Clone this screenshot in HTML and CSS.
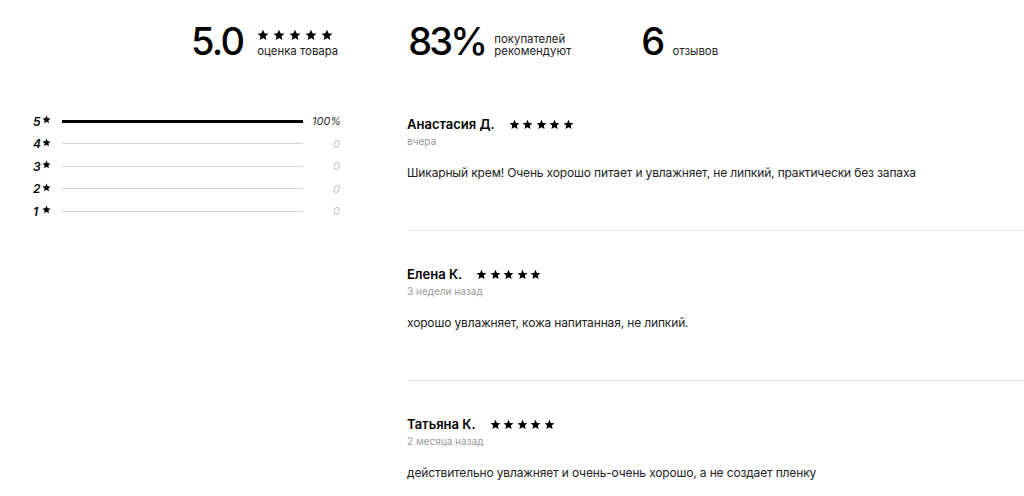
FILE: index.html
```html
<!DOCTYPE html>
<html lang="ru">
<head>
<meta charset="utf-8">
<link rel="stylesheet" href="styles.css">
</head>
<body>
<svg width="0" height="0" style="position:absolute">
  <defs>
    <symbol id="star" viewBox="0 0 24 24"><path d="M12 1.5l3.1 7.1 7.7.7-5.8 5.1 1.7 7.6L12 18.1 5.3 22l1.7-7.6L1.2 9.3l7.7-.7z"/></symbol>
  </defs>
</svg>
<div class="stats">
  <div class="stat stat-first">
    <div class="big">5.0</div>
    <div class="stat-side">
      <div class="stars stars-top">
        <svg><use href="#star"/></svg><svg><use href="#star"/></svg><svg><use href="#star"/></svg><svg><use href="#star"/></svg><svg><use href="#star"/></svg>
      </div>
      <div class="lbl">оценка товара</div>
    </div>
  </div>
  <div class="stat">
    <div class="big big-tight">83%</div>
    <div class="stat-side">
      <div class="lbl">покупателей</div>
      <div class="lbl">рекомендуют</div>
    </div>
  </div>
  <div class="stat">
    <div class="big">6</div>
    <div class="stat-side">
      <div class="lbl">отзывов</div>
    </div>
  </div>
</div>

<div class="main">
  <div class="dist">
    <div class="row">
      <span class="num">5</span><svg class="rstar"><use href="#star"/></svg>
      <div class="bar"><div class="fill" style="width:100%"></div></div>
      <span class="pct on">100%</span>
    </div>
    <div class="row">
      <span class="num">4</span><svg class="rstar"><use href="#star"/></svg>
      <div class="bar"><div class="fill" style="width:0%"></div></div>
      <span class="pct">0</span>
    </div>
    <div class="row">
      <span class="num">3</span><svg class="rstar"><use href="#star"/></svg>
      <div class="bar"><div class="fill" style="width:0%"></div></div>
      <span class="pct">0</span>
    </div>
    <div class="row">
      <span class="num">2</span><svg class="rstar"><use href="#star"/></svg>
      <div class="bar"><div class="fill" style="width:0%"></div></div>
      <span class="pct">0</span>
    </div>
    <div class="row">
      <span class="num">1</span><svg class="rstar"><use href="#star"/></svg>
      <div class="bar"><div class="fill" style="width:0%"></div></div>
      <span class="pct">0</span>
    </div>
  </div>

  <div class="reviews">
    <div class="review">
      <div class="head">
        <span class="name">Анастасия Д.</span>
        <span class="stars rv"><svg><use href="#star"/></svg><svg><use href="#star"/></svg><svg><use href="#star"/></svg><svg><use href="#star"/></svg><svg><use href="#star"/></svg></span>
      </div>
      <div class="date">вчера</div>
      <p class="text">Шикарный крем! Очень хорошо питает и увлажняет, не липкий, практически без запаха</p>
    </div>
    <div class="review">
      <div class="head">
        <span class="name">Елена К.</span>
        <span class="stars rv"><svg><use href="#star"/></svg><svg><use href="#star"/></svg><svg><use href="#star"/></svg><svg><use href="#star"/></svg><svg><use href="#star"/></svg></span>
      </div>
      <div class="date">3 недели назад</div>
      <p class="text">хорошо увлажняет, кожа напитанная, не липкий.</p>
    </div>
    <div class="review">
      <div class="head">
        <span class="name">Татьяна К.</span>
        <span class="stars rv"><svg><use href="#star"/></svg><svg><use href="#star"/></svg><svg><use href="#star"/></svg><svg><use href="#star"/></svg><svg><use href="#star"/></svg></span>
      </div>
      <div class="date">2 месяца назад</div>
      <p class="text">действительно увлажняет и очень-очень хорошо, а не создает пленку</p>
    </div>
  </div>
</div>
</body>
</html>
```

FILE: styles.css
```css
html, body {
  margin: 0;
  padding: 0;
  background: #fff;
  color: #000;
  font-family: Inter, "Liberation Sans", sans-serif;
  overflow: hidden;
}

.stats {
  display: flex;
  gap: 70px;
  padding: 20px 0 0 191px;
  height: 38px;
  align-items: flex-end;
}
.stat {
  display: flex;
  align-items: flex-end;
  gap: 9px;
}
.stat-first {
  gap: 14px;
}
.big {
  font-size: 38px;
  line-height: 34px;
  font-weight: 500;
  letter-spacing: -1.8px;
  color: #000;
}
.big-tight {
  letter-spacing: -2.8px;
}
.stat-side {
  display: flex;
  flex-direction: column;
  padding-bottom: 1px;
}
.lbl {
  font-size: 11.4px;
  line-height: 12px;
  color: #222;
}
.stars {
  display: flex;
  gap: 4px;
}
.stars svg {
  width: 12px;
  height: 12px;
  fill: #000;
}
.stars-top {
  margin-bottom: 4px;
}
.stars.rv {
  gap: 2.5px;
}
.stars.rv svg {
  width: 11px;
  height: 11px;
}

.main {
  display: flex;
  padding: 54px 0 0 33px;
  gap: 67px;
}
.dist {
  width: 307px;
  flex: none;
  display: flex;
  flex-direction: column;
  gap: 10px;
  padding-top: 3px;
}
.row {
  display: flex;
  align-items: center;
  height: 12.5px;
}
.num {
  font-size: 12px;
  font-style: italic;
  font-weight: 600;
  width: 8px;
  color: #000;
}
.rstar {
  width: 9px;
  height: 9px;
  fill: #000;
  margin-left: 1px;
  margin-top: -3px;
}
.bar {
  flex: 1;
  height: 1px;
  background: #d4d4d4;
  margin: 0 9px 0 11px;
  position: relative;
}
.fill {
  position: absolute;
  left: 0;
  top: -1px;
  height: 3px;
  background: #000;
}
.pct {
  width: 28px;
  text-align: right;
  font-size: 11px;
  font-style: italic;
  color: #c4c4c4;
}
.pct.on {
  color: #333;
}

.reviews {
  flex: 1;
  display: flex;
  flex-direction: column;
  padding-top: 4px;
}
.review {
  height: 115px;
  box-sizing: border-box;
  border-bottom: 1px solid #e6e6e6;
  margin-bottom: 35px;
}
.review:last-child {
  border-bottom: none;
}
.head {
  display: flex;
  align-items: center;
  gap: 14px;
  height: 16px;
}
.name {
  font-size: 13px;
  font-weight: 600;
  color: #000;
}
.date {
  font-size: 10px;
  color: #999;
  margin-top: 3px;
}
.text {
  font-size: 12px;
  letter-spacing: -0.15px;
  color: #222;
  margin: 18px 0 0;
  line-height: 16px;
}
```
